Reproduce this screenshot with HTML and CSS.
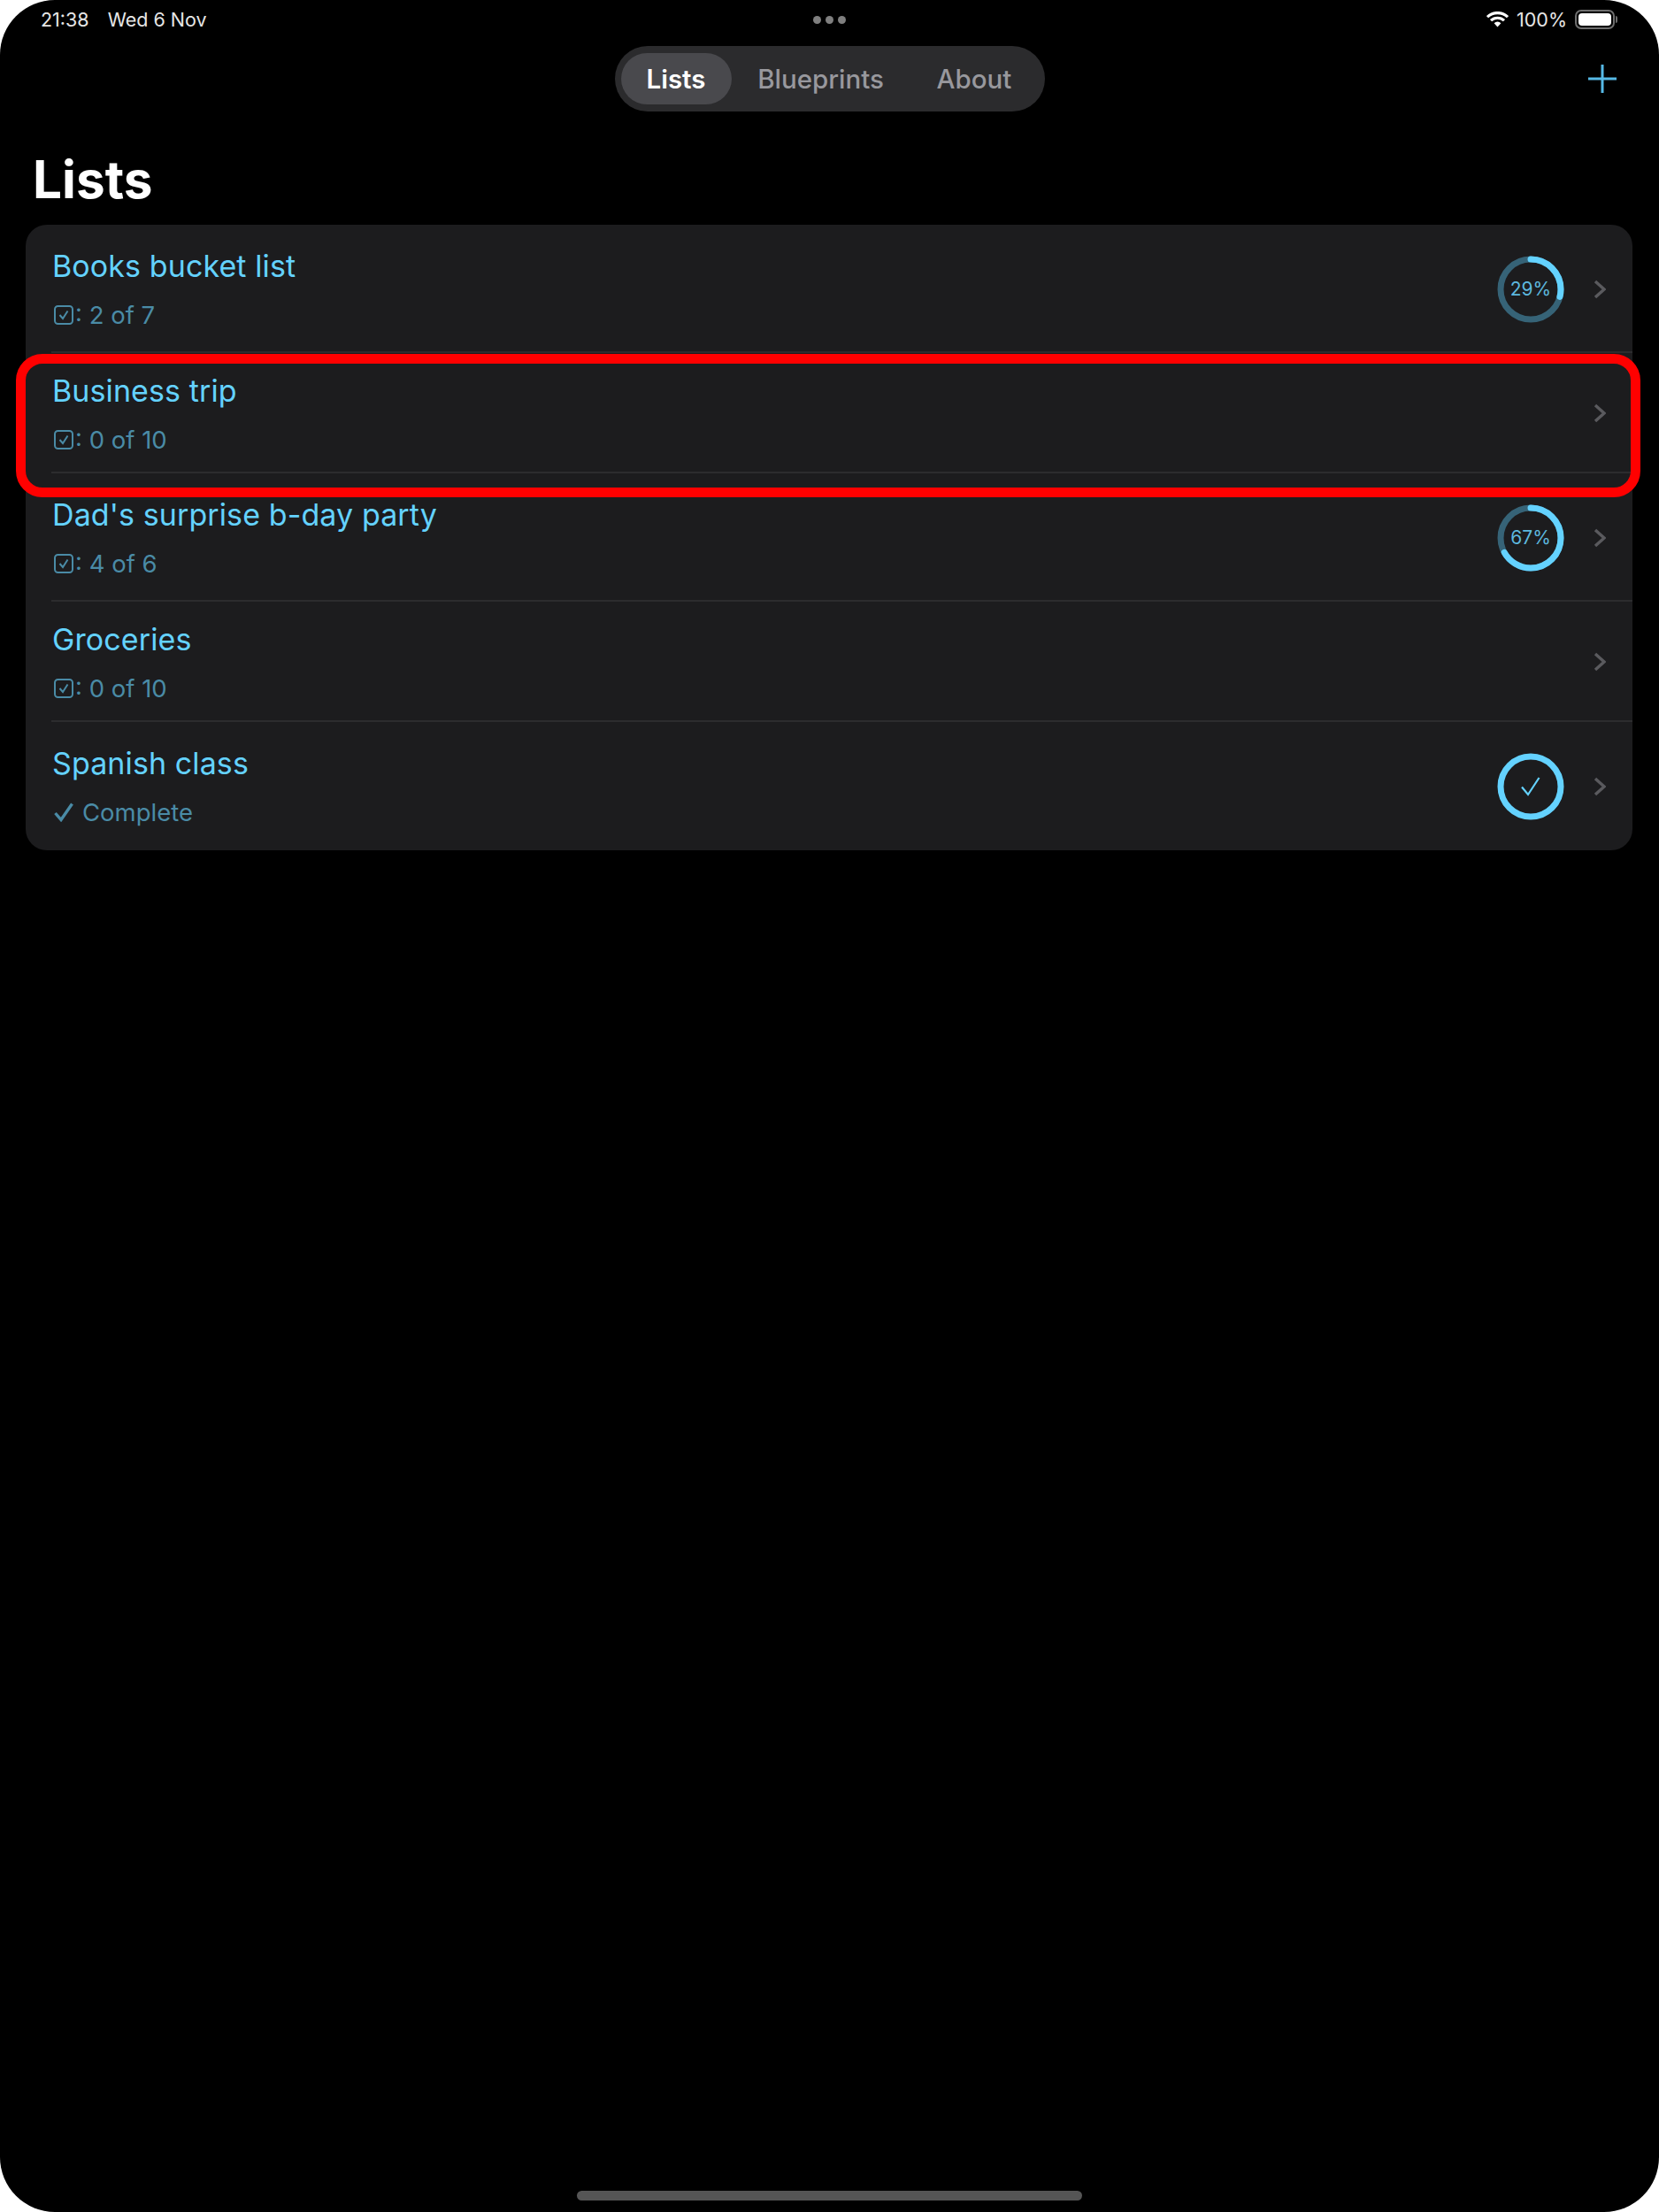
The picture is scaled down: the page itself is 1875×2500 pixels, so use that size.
FILE: index.html
```html
<html>

<head>
	<title>Lists</title>
	<link rel="stylesheet" href="styles.css">
</head>

<body>
	<div class="screen">
		<!-- Status bar -->
		<div class="status_bar">
			<div class="status_left">
				<span>21:38</span>
				<span>Wed 6 Nov</span>
			</div>
			<div class="status_dots">
				<span class="dot"></span>
				<span class="dot"></span>
				<span class="dot"></span>
			</div>
			<div class="status_right">
				<svg class="wifi" viewBox="0 0 25 18" width="25" height="18">
					<path d="M1 6.2 A16.5 16.5 0 0 1 24 6.2 M5 10.2 A11 11 0 0 1 20 10.2" fill="none" stroke="#fff" stroke-width="3.2" />
					<path d="M8.6 13.2 A5.6 5.6 0 0 1 16.4 13.2 L12.5 17.4 Z" fill="#fff" />
				</svg>
				<span class="battery_text">100%</span>
				<span class="battery"><span class="battery_fill"></span></span>
				<span class="battery_nub"></span>
			</div>
		</div>

		<!-- Tabs and add button -->
		<div class="nav_bar">
			<div class="tabs">
				<span class="tab tab_active">Lists</span>
				<span class="tab tab_blueprints">Blueprints</span>
				<span class="tab tab_about">About</span>
			</div>
			<svg class="add_icon" viewBox="0 0 32 32" width="32" height="32">
				<path d="M16 0 V32 M0 16 H32" stroke="#56b9e6" stroke-width="3" fill="none" />
			</svg>
		</div>

		<h1 class="page_title">Lists</h1>

		<div class="card">
			<div class="row row_a">
				<div class="row_text">
					<div class="row_title">Books bucket list</div>
					<div class="row_sub">
						<svg class="check_box" viewBox="0 0 22 22" width="22" height="22">
							<rect x="1" y="1" width="20" height="20" rx="3.5" fill="none" stroke="#4a8ba6" stroke-width="2" />
							<path d="M6.5 11 L10 15 L15.5 6.5" fill="none" stroke="#4a8ba6" stroke-width="2" />
						</svg>
						<span>: 2 of 7</span>
					</div>
				</div>
				<div class="ring">
					<svg viewBox="0 0 76 76" width="76" height="76">
						<circle class="ring_track" cx="38" cy="38" r="34" />
						<circle class="ring_value" cx="38" cy="38" r="34" pathLength="100" stroke-dasharray="29 100" />
					</svg>
					<span class="ring_label">29%</span>
				</div>
				<svg class="chevron" viewBox="0 0 14 22" width="14" height="22">
					<path d="M2 2 L12 11 L2 20" />
				</svg>
			</div>

			<div class="row row_b">
				<div class="row_text">
					<div class="row_title">Business trip</div>
					<div class="row_sub">
						<svg class="check_box" viewBox="0 0 22 22" width="22" height="22">
							<rect x="1" y="1" width="20" height="20" rx="3.5" fill="none" stroke="#4a8ba6" stroke-width="2" />
							<path d="M6.5 11 L10 15 L15.5 6.5" fill="none" stroke="#4a8ba6" stroke-width="2" />
						</svg>
						<span>: 0 of 10</span>
					</div>
				</div>
				<svg class="chevron" viewBox="0 0 14 22" width="14" height="22">
					<path d="M2 2 L12 11 L2 20" />
				</svg>
			</div>

			<div class="row row_a">
				<div class="row_text">
					<div class="row_title">Dad's surprise b-day party</div>
					<div class="row_sub">
						<svg class="check_box" viewBox="0 0 22 22" width="22" height="22">
							<rect x="1" y="1" width="20" height="20" rx="3.5" fill="none" stroke="#4a8ba6" stroke-width="2" />
							<path d="M6.5 11 L10 15 L15.5 6.5" fill="none" stroke="#4a8ba6" stroke-width="2" />
						</svg>
						<span>: 4 of 6</span>
					</div>
				</div>
				<div class="ring">
					<svg viewBox="0 0 76 76" width="76" height="76">
						<circle class="ring_track" cx="38" cy="38" r="34" />
						<circle class="ring_value" cx="38" cy="38" r="34" pathLength="100" stroke-dasharray="67 100" />
					</svg>
					<span class="ring_label">67%</span>
				</div>
				<svg class="chevron" viewBox="0 0 14 22" width="14" height="22">
					<path d="M2 2 L12 11 L2 20" />
				</svg>
			</div>

			<div class="row row_b">
				<div class="row_text">
					<div class="row_title">Groceries</div>
					<div class="row_sub">
						<svg class="check_box" viewBox="0 0 22 22" width="22" height="22">
							<rect x="1" y="1" width="20" height="20" rx="3.5" fill="none" stroke="#4a8ba6" stroke-width="2" />
							<path d="M6.5 11 L10 15 L15.5 6.5" fill="none" stroke="#4a8ba6" stroke-width="2" />
						</svg>
						<span>: 0 of 10</span>
					</div>
				</div>
				<svg class="chevron" viewBox="0 0 14 22" width="14" height="22">
					<path d="M2 2 L12 11 L2 20" />
				</svg>
			</div>

			<div class="row row_a">
				<div class="row_text">
					<div class="row_title">Spanish class</div>
					<div class="row_sub">
						<svg class="check_plain" viewBox="0 0 22 22" width="22" height="22">
							<path d="M1.5 12 L8 19.5 L20.5 1.5" fill="none" stroke="#4a8ba6" stroke-width="3.4" />
						</svg>
						<span>Complete</span>
					</div>
				</div>
				<div class="ring">
					<svg viewBox="0 0 76 76" width="76" height="76">
						<circle class="ring_value" cx="38" cy="38" r="34" pathLength="100" stroke-dasharray="100 100" />
						<path d="M28 38.5 L35 47 L47.5 28" fill="none" stroke="#64d2ff" stroke-width="2.2" />
					</svg>
				</div>
				<svg class="chevron" viewBox="0 0 14 22" width="14" height="22">
					<path d="M2 2 L12 11 L2 20" />
				</svg>
			</div>

			<!-- Red highlight around the second row -->
			<div class="highlight"></div>
		</div>

		<div class="home_bar"></div>
	</div>
</body>

</html>
```

FILE: styles.css
```css
html,
body {
	margin: 0;
	padding: 0;
	background-color: #fff;
}

.screen {
	position: relative;
	width: 1875px;
	height: 2500px;
	background-color: #000;
	border-radius: 62px;
	overflow: hidden;
	font-family: Inter, "Liberation Sans", sans-serif;
	color: #fff;
}

/* Status bar */
.status_bar {
	height: 44px;
	display: grid;
	grid-template-columns: 1fr auto 1fr;
	align-items: center;
	padding: 0 47px 0 46px;
	font-size: 21.5px;
}

.status_left {
	display: flex;
	gap: 21px;
	color: #e6e6e6;
}

.status_dots {
	display: flex;
	gap: 5px;
}

.dot {
	width: 9px;
	height: 9px;
	border-radius: 50%;
	background-color: #7f7f7f;
}

.status_right {
	display: flex;
	justify-content: flex-end;
	align-items: center;
}

.battery_text {
	margin-left: 9px;
	color: #e6e6e6;
}

.battery {
	margin-left: 9px;
	width: 45px;
	height: 22px;
	box-sizing: border-box;
	border: 2px solid #6e6e6e;
	border-radius: 7px;
	padding: 2px;
	display: flex;
}

.battery_fill {
	flex: 1;
	background-color: #fff;
	border-radius: 4px;
}

.battery_nub {
	width: 2px;
	height: 8px;
	margin-left: 1px;
	background-color: #6e6e6e;
	border-radius: 0 2px 2px 0;
}

/* Tabs */
.nav_bar {
	display: grid;
	grid-template-columns: 1fr auto 1fr;
	align-items: center;
	margin-top: 8px;
	padding: 0 48px;
}

.tabs {
	grid-column: 2;
	display: flex;
	align-items: center;
	width: 486px;
	height: 74px;
	box-sizing: border-box;
	padding: 8px 7px;
	background-color: #2b2b2d;
	border-radius: 37px;
	font-size: 29.5px;
	font-weight: 500;
	color: #98989d;
}

.tab {
	height: 58px;
	line-height: 58px;
	text-align: center;
}

.tab_active {
	width: 125px;
	background-color: #49494d;
	border-radius: 29px;
	color: #fff;
	font-weight: 600;
}

.tab_blueprints {
	width: 202px;
}

.tab_about {
	width: 145px;
}

.add_icon {
	grid-column: 3;
	justify-self: end;
}

.page_title {
	margin: 41px 0 15px 37px;
	height: 72px;
	line-height: 72px;
	font-size: 58.5px;
	font-weight: 700;
}

/* List card */
.card {
	position: relative;
	margin: 0 30px 0 29px;
	background-color: #1c1c1e;
	border-radius: 24px;
}

.row {
	display: flex;
	align-items: center;
	box-sizing: border-box;
	padding: 0 30px 0 30px;
	position: relative;
}

/* the rows alternate in height in the screenshot */
.row_a {
	height: 145px;
}

.row_b {
	height: 136px;
}

.row:not(:nth-last-child(2))::after {
	content: "";
	position: absolute;
	left: 29px;
	right: 0;
	bottom: 0;
	height: 2px;
	background-color: #2c2c2e;
}

.row_text {
	flex: 1;
}

.row_title {
	height: 40px;
	line-height: 40px;
	font-size: 34px;
	letter-spacing: 0.1px;
	color: #64d2ff;
}

.row_sub {
	display: flex;
	align-items: center;
	margin-top: 19px;
	height: 32px;
	font-size: 27.5px;
	color: #4a8ba6;
}

.check_box {
	margin-left: 2px;
	margin-right: 2px;
}

.check_plain {
	margin-left: 2px;
	margin-right: 10px;
}

.ring {
	position: relative;
	width: 76px;
	height: 76px;
	margin-right: 33px;
}

.ring svg {
	display: block;
}

.ring_track {
	fill: none;
	stroke: #366377;
	stroke-width: 7;
}

.ring_value {
	fill: none;
	stroke: #64d2ff;
	stroke-width: 7;
	stroke-linecap: round;
	transform: rotate(-90deg);
	transform-origin: 38px 38px;
}

.ring_label {
	position: absolute;
	top: 0;
	left: 0;
	width: 76px;
	line-height: 76px;
	text-align: center;
	font-size: 21px;
	color: #5db8df;
}

.chevron {
	fill: none;
	stroke: #5a5a5e;
	stroke-width: 3.4;
}

/* Annotation box */
.highlight {
	position: absolute;
	top: 146px;
	left: -11px;
	right: -9px;
	height: 162px;
	box-sizing: border-box;
	border: 11px solid #f00;
	border-radius: 30px;
}

.home_bar {
	position: absolute;
	left: 652px;
	top: 2476px;
	width: 571px;
	height: 11px;
	border-radius: 6px;
	background-color: #555;
}
```
